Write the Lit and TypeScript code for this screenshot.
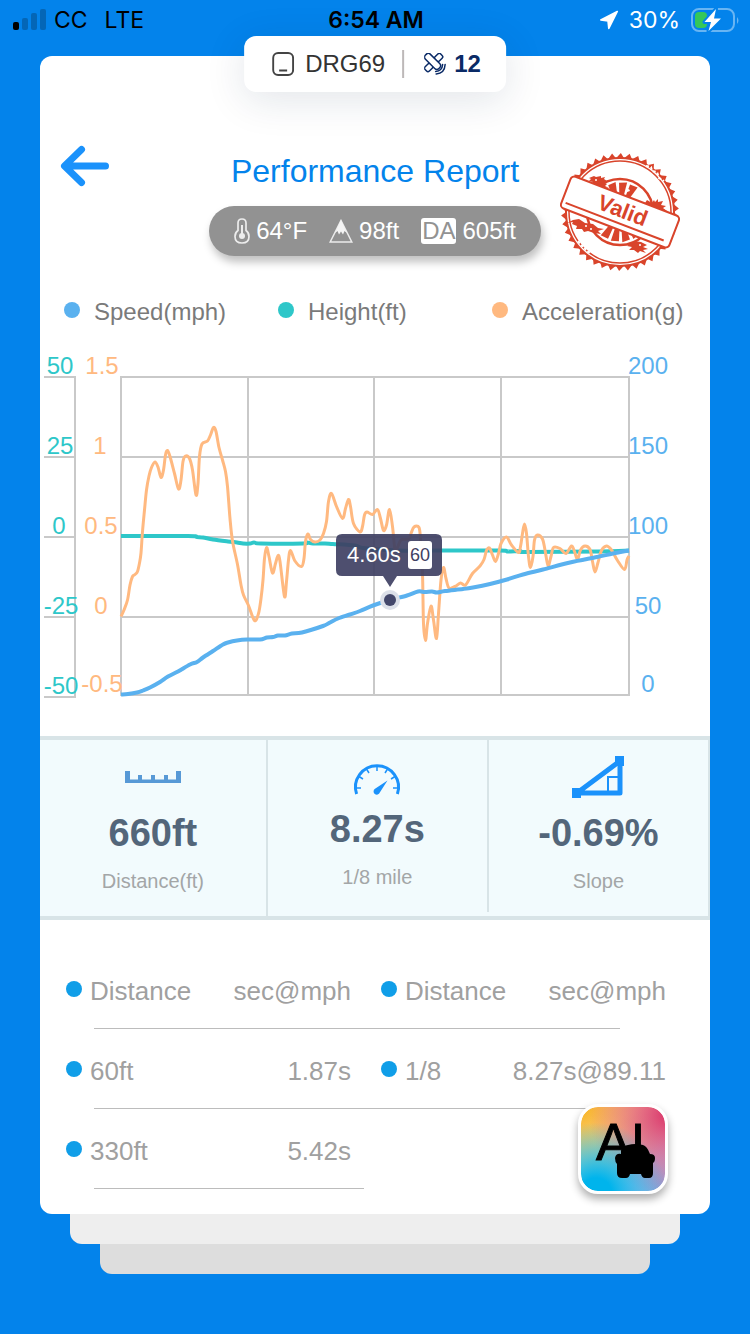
import { css, html, LitElement, svg } from 'lit';
import { customElement, property } from 'lit/decorators.js';
import { classMap } from 'lit/directives/class-map.js';

type Point = [number, number];

interface AxisLabel {
  text: string;
  x: number;
  y: number;
}

const parsePoints = (source: string): Point[] =>
  source
    .trim()
    .split(/\s+/)
    .map(pair => pair.split(',').map(Number) as Point);

/** Smooth curve through all points (Catmull-Rom converted to cubic beziers). */
const smoothPath = (points: Point[]): string => {
  let d = `M${points[0][0]} ${points[0][1]}`;
  for (let i = 0; i < points.length - 1; i++) {
    const p0 = points[i - 1] ?? points[i];
    const p1 = points[i];
    const p2 = points[i + 1];
    const p3 = points[i + 2] ?? p2;
    const c1x = p1[0] + (p2[0] - p0[0]) / 6;
    const c1y = p1[1] + (p2[1] - p0[1]) / 6;
    const c2x = p2[0] - (p3[0] - p1[0]) / 6;
    const c2y = p2[1] - (p3[1] - p1[1]) / 6;
    d += `C${c1x} ${c1y} ${c2x} ${c2y} ${p2[0]} ${p2[1]}`;
  }
  return d;
};

const heightSeries = parsePoints(`
  81,196 148,196 157,197 163,197.5 173,199.5 188,201.5 197,202.5 203,203.5 210,203.5
  214,202.5 221,203.5 263,203.5 267,202.5 273,203.5 285,203.5 293,204 315,205.5 323,208
  357,210.5 405,210.5 460,210.5 468,211.5 480,211 487,212 560,211.5 589,210.5
`);

const accelerationSeries = parsePoints(`
  81,276.5 84,270 87.5,260 90,245 92.5,236.5 95,234.5 97.5,231.5 99.5,223 101,213 102.5,191.5
  104.5,170 106.5,150 109,136 111.5,127.5 115,122 118,127 121,137.5 123.5,130 125.5,115
  127.5,110.5 130,116.5 134.5,133.5 138.5,149 141,140 143,121.5 145.5,116 149.5,118.5
  152.5,130 156,155 158,143.5 159.5,116.5 162,104 167.5,101 170.5,95 173.5,87.5 176,91.5
  179,107.5 182.5,120 185.5,131.5 187.5,146.5 190,178.5 192.5,201 197.5,224.5 201,245
  203.5,255 208.5,265.5 214.5,280.5 218.5,273.5 221,258.5 223,240 224.5,218.5 226.5,207.5
  229,216.5 232.5,233 235.5,223.5 238,215.5 240,221.5 244.5,256.5 246.5,241.5 248.5,220
  250.5,210.5 255,221 261.5,226.5 264,218.5 265.5,201.5 268,194 270.5,199.5 275,202 280,200
  283.5,193.5 286.5,181.5 288.5,161.5 291.5,153.5 296.5,166.5 302.5,178.5 305.5,168.5
  308.5,159.5 310.5,166.5 313.5,183.5 320,192 322.5,186.5 324.5,175 327,172 332.5,174.5
  337.5,169.5 340.5,178.5 343.5,190.5 346.5,185 349.5,169.5 352.5,186.5 355,210 357.5,207.5
  361,200 368.5,199 371,193.5 374,187 379,187.5 380.5,200 382.5,233.5 383.5,283.5 385.5,300.5
  387.5,283.5 391,266 393.5,280 396.5,298.5 398.5,273.5 401,240 403.5,227.5 406,238.5 409,248
  415,246.5 420.5,243 425.5,245 432.5,233.5 440,226 444,219.5 446.5,210.5 449.5,208 452.5,215
  455.5,221.5 458.5,213.5 461,203.5 466.5,197 471.5,205 478.5,212.5 480.5,206.5 482.5,193.5
  484.5,184 486.5,193.5 488.5,216.5 490.5,227.5 493,216.5 494.5,200 497.5,195 502.5,199
  505,210 508,225.5 511,216.5 513.5,207.5 520,208.5 526,213.5 531.5,206 534.5,211.5
  537.5,219.5 540.5,210 545,206 550,209.5 552.5,221.5 555,232 558,222.5 561.5,210.5 566.5,206
  571.5,210 577.5,220.5 584.5,229.5 587,220 589,216
`);

const speedSeries = parsePoints(`
  81,354.5 88,354 97,352.5 103,350.5 110,347.5 120,342 128,336.5 138,331.5 150,324.5 157,322
  163,317.5 173,311 183,304.5 188,302.5 197,300.5 207,299.5 220,299.5 227,297.5 233,297
  238,295.5 245,295.5 252,293.5 262,292.5 283,286 290,282.5 298,278.5 310,274.5 320,271
  333,265.5 350,260 367,255.5 378,251.5 385,252 392,251.5 397,252.5 405,251 423,249
  433,247.5 450,244 467,239.5 483,234.5 503,229.5 530,222.5 557,217 573,213.5 589,210.5
`);

const heightLabels: AxisLabel[] = [
  { text: '50', x: 20, y: 34 },
  { text: '25', x: 20, y: 114 },
  { text: '0', x: 19, y: 194 },
  { text: '-25', x: 21, y: 274 },
  { text: '-50', x: 21, y: 354 }
];

const accelerationLabels: AxisLabel[] = [
  { text: '1.5', x: 62, y: 34 },
  { text: '1', x: 60, y: 114 },
  { text: '0.5', x: 61, y: 194 },
  { text: '0', x: 61, y: 274 },
  { text: '-0.5', x: 62, y: 352 }
];

const speedLabels: AxisLabel[] = [
  { text: '200', x: 608, y: 34 },
  { text: '150', x: 608, y: 114 },
  { text: '100', x: 608, y: 194 },
  { text: '50', x: 608, y: 274 },
  { text: '0', x: 608, y: 352 }
];

@customElement('status-bar')
export class StatusBar extends LitElement {
  static get styles() {
    return css`
      :host {
        display: grid;
        grid-template-columns: 1fr auto 1fr;
        align-items: center;
        height: 40px;
        padding: 0 10px 0 12px;
        color: #000;
        font-family: Inter, 'Liberation Sans', sans-serif;
        font-size: 23px;
        line-height: 40px;
      }

      .side {
        display: flex;
        align-items: center;
        gap: 8px;
      }

      .network {
        margin-left: 9px;
      }

      .time {
        font-weight: 600;
      }

      .right {
        justify-content: flex-end;
        gap: 10px;
        color: #fff;
      }
    `;
  }

  render() {
    return html`
      <div class="side">
        <svg width="34" height="24" viewBox="0 0 34 24">
          <rect x="1" y="14" width="6" height="8" rx="2" />
          <g fill="#0466b6">
            <rect x="10" y="10" width="6" height="12" rx="2" />
            <rect x="19" y="5" width="6" height="17" rx="2" />
            <rect x="28" y="1" width="6" height="21" rx="2" />
          </g>
        </svg>
        <span>CC</span>
        <span class="network">LTE</span>
      </div>
      <span class="time">6:54 AM</span>
      <div class="side right">
        <svg width="20" height="20" viewBox="0 0 20 20">
          <path
            d="M18.300 1.500 1.800 10 9 11 9.800 18.500Z"
            fill="#fff"
            stroke="#fff"
            stroke-width="1.600"
            stroke-linejoin="round"
          />
        </svg>
        <span>30%</span>
        <svg width="50" height="26" viewBox="0 0 50 26">
          <rect
            x="2"
            y="2"
            width="42"
            height="22"
            rx="7"
            fill="none"
            stroke="#68b5f3"
            stroke-width="2"
          />
          <path d="M47 10q3 3.500 0 7z" fill="#68b5f3" />
          <rect x="5" y="5" width="12" height="16" rx="4" fill="#35c759" />
          <path
            d="M26 2 14.500 15H21l-2.500 9L31 11.500h-7z"
            fill="#fff"
            stroke="#0383eb"
            stroke-width="4"
            stroke-linejoin="round"
            paint-order="stroke"
          />
        </svg>
      </div>
    `;
  }
}

@customElement('valid-stamp')
export class ValidStamp extends LitElement {
  static get styles() {
    return css`
      :host {
        display: block;
      }

      svg {
        display: block;
      }

      .word {
        font: bold 22px 'Liberation Sans', sans-serif;
      }
    `;
  }

  private teeth() {
    const count = 42;
    const at = (radius: number, step: number) => {
      const angle = (step / count) * Math.PI * 2;
      return `${60 + radius * Math.cos(angle)},${59 + radius * Math.sin(angle)}`;
    };
    return Array.from({ length: count }, (_, i) => {
      return `M${at(54, i)}L${at(59, i + 0.6)}L${at(54, i + 1)}Z`;
    }).join('');
  }

  private rays() {
    return [-128, -106, -84, -62, 56, 78, 100, 122].map(
      deg => svg`
        <path
          d="M13 -2 29 -4 30 4 13 1.500Z"
          transform="translate(60 59) rotate(${deg})"
        ></path>
      `
    );
  }

  render() {
    return html`
      <svg width="120" height="118" viewBox="0 0 120 118" fill="#d9442b">
        <path d=${this.teeth()} />
        <circle cx="60" cy="59" r="54" fill="none" stroke="#d9442b" stroke-width="2" />
        <circle cx="60" cy="59" r="51" fill="none" stroke="#d9442b" stroke-width="1.500" />
        <path
          d="M86 13l5 1 1 4 5 1 2 6 5 3M18 88l4 5 2 0 2 5 5 2"
          fill="none"
          stroke="#fff"
          stroke-dasharray="3 2"
          stroke-width="2"
        />
        <circle cx="60" cy="59" r="33" fill="none" stroke="#d9442b" stroke-width="2.500" />
        ${this.rays()}
        <path
          d="M29 25l5-2 2 1 5-1 0 2 4-1-1 2 3 2-3 2 3 1-2 2 4 2-9-1-8-3 1-2-4-1 2-2zM92 50l2-3 1 2 3-3 0 3 5-1-2 4 5 1-3 2 4 3-4 1 3 5-6-2-16-7-2-6 3 1 2-3z"
        />
        <path
          d="M13 67l6-1 6 4 8 1 5 4 6 1-6 2 3 3-7-1-6-2-4 1-2-3-6 0 1-3-5-2 1-2-6 1zM74 88l7 1 6 3-4 2 5 2-5 1 3 3-6-2-2 2-4-3-5 0 3-3-5-1z"
        />
        <g fill="#fff">
          <circle cx="36" cy="27" r="1" />
          <circle cx="94" cy="55" r="1" />
          <circle cx="26" cy="73" r="1" />
          <circle cx="31" cy="76" r="1" />
          <circle cx="80" cy="92" r="1" />
          <path d="M49 39l3-2 2 1 1 2-5 1zM66 37l3-1 1 2-3 1z" />
        </g>
        <g transform="translate(60 59) rotate(21)">
          <rect
            x="-58"
            y="-17"
            width="116"
            height="34"
            rx="4"
            fill="#fff"
            stroke="#d9442b"
            stroke-width="2"
          />
          <path d="M-54 11H51" stroke="#d9442b" stroke-width="2" />
          <text class="word" x="2" y="5" text-anchor="middle">Valid</text>
        </g>
      </svg>
    `;
  }
}

@customElement('run-chart')
export class RunChart extends LitElement {
  static get styles() {
    return css`
      :host {
        display: block;
      }

      svg {
        display: block;
        width: 100%;
        font-family: 'Liberation Sans', sans-serif;
        font-size: 24px;
      }

      .grid {
        fill: none;
        stroke: #c9c9c9;
        stroke-width: 2px;
      }

      .series {
        fill: none;
        stroke-linejoin: round;
      }

      .height-series {
        stroke: #2ec7c9;
        stroke-width: 4px;
      }

      .acceleration-series {
        stroke: #ffb980;
        stroke-width: 3px;
      }

      .speed-series {
        stroke: #5ab1ef;
        stroke-width: 4px;
      }

      .height-axis {
        fill: #2ec7c9;
      }

      .acceleration-axis {
        fill: #ffb980;
      }

      .speed-axis {
        fill: #5ab1ef;
      }

      .tip {
        fill: #3f4063;
        fill-opacity: 0.92;
      }

      .tip-time {
        fill: #fff;
        font-size: 22px;
      }

      .tip-speed {
        fill: #3f4063;
        font-size: 18px;
      }
    `;
  }

  private axis(name: string, labels: AxisLabel[]) {
    return svg`
      <g class=${name} text-anchor="middle">
        ${labels.map(label => svg`<text x=${label.x} y=${label.y}>${label.text}</text>`)}
      </g>
    `;
  }

  render() {
    return html`
      <svg viewBox="0 0 670 380" role="img" aria-label="Speed, height and acceleration">
        <path class="grid" d="M4 37H35M4 117H35M4 197H35M4 277H35M4 357H36M35 36V358" />
        <path class="grid" d="M81 37H589V355H81ZM81 117H589M81 197H589M81 277H589" />
        <path class="grid" d="M208 37V355M334 37V355M461 37V355" />
        <path class="series height-series" d=${smoothPath(heightSeries)} />
        <path class="series acceleration-series" d=${smoothPath(accelerationSeries)} />
        <path class="series speed-series" d=${smoothPath(speedSeries)} />
        ${this.axis('height-axis', heightLabels)}
        ${this.axis('acceleration-axis', accelerationLabels)}
        ${this.axis('speed-axis', speedLabels)}
        <path
          class="tip"
          d="M302 194H396Q402 194 402 200V230Q402 236 396 236H357L350 247 343 236H302Q296 236 296 230V200Q296 194 302 194Z"
        />
        <text class="tip-time" x="307" y="222">4.60s</text>
        <rect x="368" y="201" width="24" height="28" rx="3" fill="#fff" />
        <text class="tip-speed" x="380" y="221" text-anchor="middle">60</text>
        <circle cx="350" cy="260" r="10" fill="#dce0e9" />
        <circle cx="350" cy="260" r="6" fill="#43476b" />
      </svg>
    `;
  }
}

@customElement('stat-cell')
export class StatCell extends LitElement {
  @property() value = '';

  @property() label = '';

  static get styles() {
    return css`
      :host {
        display: flex;
        flex-direction: column;
        align-items: center;
        justify-content: flex-end;
        box-sizing: border-box;
        padding-bottom: 23px;
        border-right: 2px solid #d8e4e7;
      }

      .value {
        margin-top: 10px;
        color: #53667a;
        font-size: 38px;
        font-weight: bold;
        line-height: 48px;
      }

      .label {
        margin-top: 12px;
        color: #a3a6a7;
        font-size: 20px;
        line-height: 24px;
      }
    `;
  }

  render() {
    return html`
      <slot></slot>
      <div class="value">${this.value}</div>
      <div class="label">${this.label}</div>
    `;
  }
}

@customElement('app-root')
export class AppRoot extends LitElement {
  private legend = [
    { label: 'Speed(mph)', tone: 'speed' },
    { label: 'Height(ft)', tone: 'height' },
    { label: 'Acceleration(g)', tone: 'acceleration' }
  ];

  private splits = [
    [
      { distance: '60ft', result: '1.87s' },
      { distance: '1/8', result: '8.27s@89.11' }
    ],
    [{ distance: '330ft', result: '5.42s' }]
  ];

  static get styles() {
    return css`
      :host {
        display: block;
        min-height: 100vh;
        background: #0383eb;
        font-family: 'Liberation Sans', Arial, sans-serif;
      }

      button {
        padding: 0;
        border: 0;
        background: none;
        cursor: pointer;
      }

      svg {
        display: block;
        flex: none;
      }

      .card {
        position: relative;
        margin: 16px 40px 0;
        padding: 89px 0 25px;
        border-radius: 12px;
        background: #fff;
      }

      .device {
        position: absolute;
        top: -20px;
        left: 50%;
        transform: translateX(-50%);
        display: flex;
        align-items: center;
        box-sizing: border-box;
        height: 56px;
        padding: 0 25px 0 28px;
        border-radius: 12px;
        background: #fff;
        box-shadow: 0 8px 40px rgba(20, 40, 70, 0.12);
        color: #333;
        font-size: 24px;
        line-height: 28px;
      }

      .device-name {
        margin-left: 11px;
        padding-right: 17px;
      }

      .satellites {
        display: flex;
        align-items: center;
        gap: 8px;
        padding-left: 20px;
        border-left: 2px solid #bdb8b8;
        color: #0a2a66;
        font-weight: bold;
      }

      .header {
        display: grid;
        grid-template-columns: 1fr auto 1fr;
        align-items: start;
        padding: 0 20px;
      }

      .back {
        justify-self: start;
      }

      .stamp {
        justify-self: end;
        margin: 8px 10px 0 0;
      }

      .heading {
        display: flex;
        flex-direction: column;
        align-items: center;
        gap: 15px;
        padding-top: 6px;
      }

      h1 {
        margin: 0;
        color: #0383eb;
        font-size: 32px;
        font-weight: normal;
        line-height: 40px;
      }

      .conditions {
        display: flex;
        align-items: center;
        gap: 22px;
        height: 50px;
        padding: 0 25px;
        border-radius: 25px;
        background: #929292;
        box-shadow: 2px 6px 8px rgba(0, 0, 0, 0.25);
        color: #fff;
        font-size: 24px;
        line-height: 26px;
      }

      .condition {
        display: flex;
        align-items: center;
        gap: 6px;
      }

      .density {
        padding: 0 1px;
        border-radius: 3px;
        background: #fff;
        color: #929292;
      }

      .legend {
        display: grid;
        grid-template-columns: repeat(3, 1fr);
        margin: 27px 0 14px;
        padding: 0 4px 0 24px;
        list-style: none;
        color: #7a7a7a;
        font-size: 24px;
        line-height: 28px;
      }

      .legend-item {
        display: flex;
        align-items: center;
        gap: 14px;
      }

      .dot {
        flex: none;
        width: 16px;
        height: 16px;
        margin-bottom: 4px;
        border-radius: 50%;
        background: #109ee8;
      }

      .dot.speed {
        background: #5ab1ef;
      }

      .dot.height {
        background: #2ec7c9;
      }

      .dot.acceleration {
        background: #ffb980;
      }

      .stats {
        display: grid;
        grid-template-columns: 34% 33% 33%;
        margin-top: 16px;
        border: solid #d8e4e7;
        border-width: 4px 0;
        background: #f2fbfd;
      }

      .stat {
        height: 176px;
      }

      .stat.short {
        height: 172px;
      }

      .splits {
        margin: 29px 44px 0 26px;
      }

      table {
        width: 100%;
        table-layout: fixed;
        border-collapse: collapse;
        color: #a0a0a0;
        font-size: 26px;
        line-height: 30px;
      }

      tr {
        height: 80px;
        background: linear-gradient(#bcbcbc, #bcbcbc) no-repeat 28px 100% / calc(100% - 74px) 1px;
      }

      tr.half {
        background-size: 45% 1px;
      }

      th,
      td {
        padding: 4px 0 0;
        font-weight: normal;
        text-align: left;
        white-space: nowrap;
      }

      .name {
        display: flex;
        align-items: center;
        gap: 8px;
      }

      .result {
        text-align: right;
      }

      .name-column {
        width: 20%;
      }

      .result-column {
        width: 27.5%;
      }

      .gutter-column {
        width: 5%;
      }

      .assistant {
        position: absolute;
        right: 42px;
        bottom: 20px;
        border: 3px solid #fff;
        border-radius: 20px;
        background:
          radial-gradient(circle at 20% 100%, #00b4ec 14%, transparent 62%),
          radial-gradient(circle at 100% 12%, #dc3f6e 4%, transparent 66%),
          radial-gradient(circle at 0 0, #f8b62c 8%, transparent 75%),
          radial-gradient(circle at 100% 100%, #9fa5d8 10%, transparent 70%),
          #d6a39a;
        background-origin: border-box;
        background-clip: padding-box;
        background-color: #fff;
        box-shadow: 0 5px 9px rgba(0, 0, 0, 0.32);
      }

      .assistant-label {
        font: 52px 'Liberation Sans', sans-serif;
        stroke: #000;
        stroke-width: 1px;
      }

      .sheet {
        height: 30px;
        margin: 0 70px;
        border-radius: 0 0 12px 12px;
        background: #eee;
      }

      .sheet.last {
        margin: 0 100px;
        background: #ddd;
      }
    `;
  }

  private renderDevice() {
    return html`
      <div class="device">
        <svg width="22" height="24" viewBox="0 0 22 24" fill="none" stroke="#444" stroke-width="2">
          <rect x="1" y="1" width="20" height="22" rx="5" />
          <path d="M7 18.500H15" />
        </svg>
        <span class="device-name">DRG69</span>
        <div class="satellites">
          <svg
            width="22"
            height="22"
            viewBox="0 0 22 22"
            fill="none"
            stroke="#0a2a66"
            stroke-width="1.500"
            stroke-linecap="round"
            stroke-linejoin="round"
          >
            <g transform="translate(9.500 9.500)">
              <rect x="-11" y="-3" width="8" height="6" rx="2" transform="rotate(-45)" />
              <rect x="3" y="-3" width="8" height="6" rx="2" transform="rotate(-45)" />
              <rect x="-11" y="-3.500" width="19" height="7" rx="3" transform="rotate(45)" fill="#fff" />
            </g>
            <path d="M18.500 11.500Q18 18 11.500 18.500M21 11.500Q20.500 20.500 12 21" />
          </svg>
          <span>12</span>
        </div>
      </div>
    `;
  }

  private renderHeader() {
    return html`
      <header class="header">
        <button class="back" aria-label="Back">
          <svg
            width="50"
            height="42"
            viewBox="0 0 50 42"
            fill="none"
            stroke="#1b92fb"
            stroke-width="7"
            stroke-linecap="round"
            stroke-linejoin="round"
          >
            <path d="M21.500 4.500 4.500 21 21.500 37.500M5 21H45.500" />
          </svg>
        </button>
        <div class="heading">
          <h1>Performance Report</h1>
          <div class="conditions">
            <span class="condition">
              <svg width="16" height="26" viewBox="0 0 16 26" fill="none" stroke="#ececec">
                <path
                  d="M4 12.500V5Q4 1 8 1T12 5V12.500Q15 14.500 15 18.500 15 25 8 25T1 18.500Q1 14.500 4 12.500Z"
                  stroke-width="1.700"
                />
                <path d="M8 7V18" stroke-width="2" />
                <circle cx="8" cy="18" r="3" fill="#ececec" stroke="none" />
              </svg>
              64°F
            </span>
            <span class="condition">
              <svg width="24" height="24" viewBox="0 0 24 24">
                <path
                  d="M12 1.500 22.800 23H1.200Z"
                  fill="none"
                  stroke="#ececec"
                  stroke-width="1.500"
                />
                <path d="M12 1 18 14 15.500 12 14 15.500 12 12.500 10 15.500 8.500 12 6 14Z" fill="#f4f4f4" />
              </svg>
              98ft
            </span>
            <span class="condition"><span class="density">DA</span>605ft</span>
          </div>
        </div>
        <valid-stamp class="stamp"></valid-stamp>
      </header>
    `;
  }

  private renderStats() {
    return html`
      <section class="stats">
        <stat-cell class="stat" value="660ft" label="Distance(ft)">
          <svg width="56" height="44" viewBox="0 0 56 44" fill="#5799d6">
            <path
              d="M0 16H5V24.500H13V20H17V24.500H26V20H30V24.500H39V20H43V24.500H51V16H56V28H0Z"
            />
          </svg>
        </stat-cell>
        <stat-cell class="stat short" value="8.27s" label="1/8 mile">
          <svg width="56" height="44" viewBox="0 0 56 44" fill="none" stroke="#1b92fb">
            <path d="M7.600 43A21.500 21.500 0 1 1 48.400 43" stroke-width="3" />
            <path
              d="M28 15V20M38.500 18 36 22M17.500 18 20 22M46 25.500 42 28M10 25.500 14 28M49 37H44M7 37H12"
              stroke-width="1.500"
            />
            <path d="M38.500 29.500 30.800 41.500A3.200 3.200 0 1 1 26 37.800Z" fill="#1b92fb" stroke="none" />
          </svg>
        </stat-cell>
        <stat-cell class="stat" value="-0.69%" label="Slope">
          <svg width="56" height="44" viewBox="0 0 56 44" fill="#1b92fb">
            <path d="M2 33H11V43H2ZM45 1H54V11H45Z" />
            <path
              d="M7 38H50V6Z"
              fill="none"
              stroke="#1b92fb"
              stroke-width="5"
              stroke-linejoin="round"
            />
            <path d="M48 22H38V36" fill="none" stroke="#1b92fb" stroke-width="2" />
          </svg>
        </stat-cell>
      </section>
    `;
  }

  private renderSplits() {
    return html`
      <div class="splits">
        <table>
          <colgroup>
            <col class="name-column" />
            <col class="result-column" />
            <col class="gutter-column" />
            <col class="name-column" />
            <col class="result-column" />
          </colgroup>
          <thead>
            <tr>
              <th><span class="name"><i class="dot"></i>Distance</span></th>
              <th class="result">sec@mph</th>
              <th></th>
              <th><span class="name"><i class="dot"></i>Distance</span></th>
              <th class="result">sec@mph</th>
            </tr>
          </thead>
          <tbody>
            ${this.splits.map(
              row => html`
                <tr class=${classMap({ half: row.length === 1 })}>
                  ${row.map(
                    (split, index) => html`
                      ${index > 0 ? html`<td></td>` : ''}
                      <td><span class="name"><i class="dot"></i>${split.distance}</span></td>
                      <td class="result">${split.result}</td>
                    `
                  )}
                  ${row.length === 1 ? html`<td colspan="3"></td>` : ''}
                </tr>
              `
            )}
          </tbody>
        </table>
      </div>
    `;
  }

  render() {
    return html`
      <status-bar></status-bar>
      <main class="card">
        ${this.renderDevice()} ${this.renderHeader()}
        <ul class="legend">
          ${this.legend.map(
            item => html`
              <li class="legend-item"><i class="dot ${item.tone}"></i>${item.label}</li>
            `
          )}
        </ul>
        <run-chart></run-chart>
        ${this.renderStats()} ${this.renderSplits()}
        <button class="assistant" aria-label="AI">
          <svg width="84" height="84" viewBox="0 0 84 84">
            <text class="assistant-label" x="15" y="53">AI</text>
            <path
              d="M40 44Q42 38 47 38Q54 36 62 38Q66 39 69 47Q74 47 74 51Q74 55 72 56V66Q72 71 68 71H64Q61 71 60 67H49Q48 71 45 71H41Q36 71 36 66V57Q34 55 34 51Q35 46 40 47Z"
            />
          </svg>
        </button>
      </main>
      <div class="sheet"></div>
      <div class="sheet last"></div>
    `;
  }
}

declare global {
  interface HTMLElementTagNameMap {
    'app-root': AppRoot;
    'run-chart': RunChart;
    'stat-cell': StatCell;
    'status-bar': StatusBar;
    'valid-stamp': ValidStamp;
  }
}
